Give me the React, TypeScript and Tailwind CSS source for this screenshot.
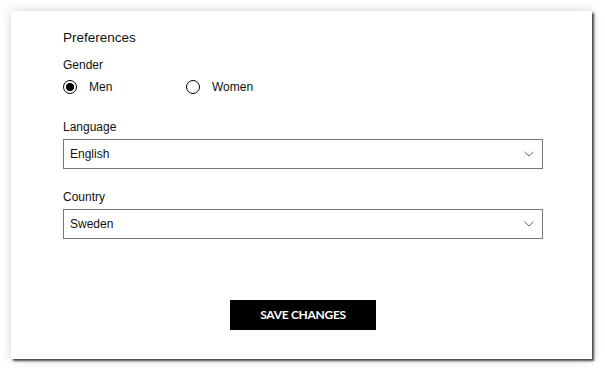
import { useState } from "react";

const languages = ["English", "Svenska", "Deutsch"];
const countries = ["Sweden", "Norway", "Denmark"];

function Chevron() {
  return (
    <svg width="10" height="6" viewBox="0 0 10 6" fill="none" className="shrink-0 mr-[1px]">
      <path d="M0.5 0.8L5 5L9.5 0.8" stroke="#666" strokeWidth="1" />
    </svg>
  );
}

function Radio({ checked, label, onClick }: { checked: boolean; label: string; onClick: () => void }) {
  return (
    <button onClick={onClick} className="flex items-center w-[123px] h-[14px] text-left">
      <span className="flex items-center justify-center w-[14px] h-[14px] rounded-full border-[1.6px] border-black">
        {checked && <span className="w-[7.5px] h-[7.5px] rounded-full bg-black" />}
      </span>
      <span className="ml-[12px] text-[12px] leading-[14px] text-[#111]">{label}</span>
    </button>
  );
}

function SelectField({ label, value, options, onChange }: { label: string; value: string; options: string[]; onChange: (v: string) => void }) {
  return (
    <div>
      <div className="text-[12px] leading-[14px] text-[#111]">{label}</div>
      <div className="relative mt-[5px] h-[30px] border border-[#767676] flex items-center pl-[6px] pr-[7px]">
        <span className="flex-1 text-[12px] leading-[14px] text-[#111]">{value}</span>
        <Chevron />
        <select
          value={value}
          onChange={(e) => onChange(e.target.value)}
          className="absolute inset-0 opacity-0 cursor-pointer"
        >
          {options.map((o) => (
            <option key={o}>{o}</option>
          ))}
        </select>
      </div>
    </div>
  );
}

export default function App() {
  const [gender, setGender] = useState("men");
  const [language, setLanguage] = useState("English");
  const [country, setCountry] = useState("Sweden");

  return (
    <div className="w-[605px] h-[373px] bg-white pt-[11px] pl-[11px] font-['Liberation_Sans',Arial,sans-serif]">
      <div className="w-[581px] h-[348px] bg-white pt-[18px] pl-[52px] pr-[49px] shadow-[2px_2px_2px_rgba(0,0,0,0.7),0_0_10px_rgba(0,0,0,0.18)]">
        <h2 className="text-[13.5px] leading-[17px] text-[#111]">Preferences</h2>

        <div className="mt-[12px] text-[12px] leading-[14px] text-[#111]">Gender</div>
        <div className="mt-[8px] flex">
          <Radio checked={gender === "men"} label="Men" onClick={() => setGender("men")} />
          <Radio checked={gender === "women"} label="Women" onClick={() => setGender("women")} />
        </div>

        <div className="mt-[26px]">
          <SelectField label="Language" value={language} options={languages} onChange={setLanguage} />
        </div>
        <div className="mt-[21px]">
          <SelectField label="Country" value={country} options={countries} onChange={setCountry} />
        </div>

        <div className="mt-[61px] flex justify-center">
          <button className="w-[146px] h-[30px] bg-black text-white text-[12px] font-bold font-['Lato',sans-serif] tracking-[-0.3px]">
            SAVE CHANGES
          </button>
        </div>
      </div>
    </div>
  );
}
